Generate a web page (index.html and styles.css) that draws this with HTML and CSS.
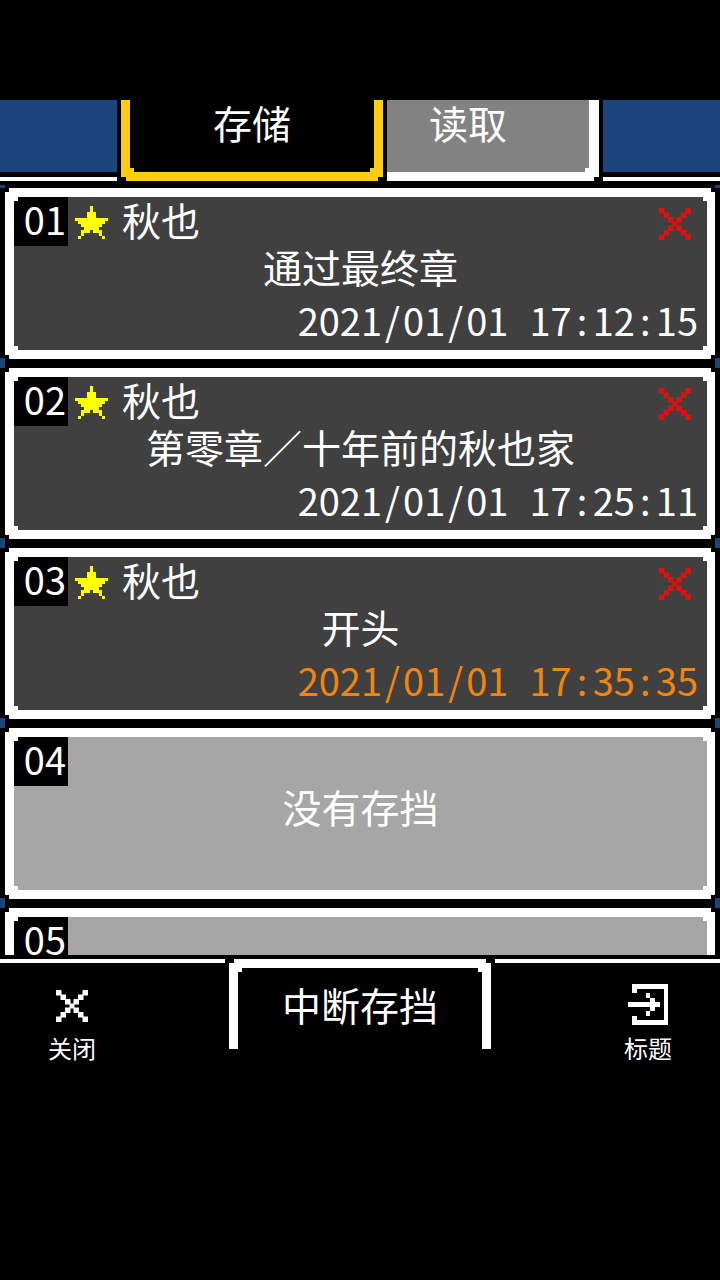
FILE: index.html
```
<!DOCTYPE html>
<html lang="zh-CN">
<head>
<meta charset="UTF-8">
<meta name="viewport" content="width=device-width, initial-scale=1">
<title>存储</title>
<link rel="stylesheet" href="styles.css">
</head>
<body>

<!-- 图标 -->
<svg class="defs" aria-hidden="true">
  <symbol id="star" viewBox="0 0 11 11">
    <path d="M5 0h1v2h-1zM4 2h3v2h-3zM0 4h11v1h-11zM1 5h9v1h-9zM2 6h7v1h-7zM3 7h5v1h-5zM2 8h3v1h-3zM6 8h3v1h-3zM2 9h1v1h-1zM8 9h1v1h-1zM1 10h1v1h-1zM9 10h1v1h-1z"/>
  </symbol>
  <symbol id="cross" viewBox="0 0 64 64">
    <path d="M0 0h11v11h-11zM9 9h11v11h-11zM18 18h11v11h-11zM27 27h10v10h-10zM35 35h11v11h-11zM44 44h11v11h-11zM53 53h11v11h-11zM53 0h11v11h-11zM44 9h11v11h-11zM35 18h11v11h-11zM18 35h11v11h-11zM9 44h11v11h-11zM0 53h11v11h-11z"/>
  </symbol>
  <symbol id="exit" viewBox="0 0 40 41">
    <path d="M4 0h36v41h-36v-9h5v4h27v-31h-27v4h-5zM0 18h22v-4h5v4h5v5h-5v4h-5v-4h-22zM18 9h4v5h-4zM18 27h4v5h-4z"/>
  </symbol>
</svg>

<main class="screen">
  <nav class="tabs">
    <div class="side"></div>
    <button class="tab active">存储</button>
    <button class="tab load">读取</button>
    <div class="side"></div>
  </nav>

  <ul class="list">
    <li class="slot">
      <div class="frame"><div class="card">
        <div class="top">
          <span class="no">01</span>
          <svg class="star"><use href="#star"/></svg>
          <span class="name">秋也</span>
          <button class="del" aria-label="删除 01"><svg><use href="#cross"/></svg></button>
        </div>
        <div class="title">通过最终章</div>
        <time class="time"><span>2021<i>/</i>01<i>/</i>01</span> <span>17<i>:</i>12<i>:</i>15</span></time>
      </div></div>
    </li>
    <li class="slot">
      <div class="frame"><div class="card">
        <div class="top">
          <span class="no">02</span>
          <svg class="star"><use href="#star"/></svg>
          <span class="name">秋也</span>
          <button class="del" aria-label="删除 02"><svg><use href="#cross"/></svg></button>
        </div>
        <div class="title">第零章／十年前的秋也家</div>
        <time class="time"><span>2021<i>/</i>01<i>/</i>01</span> <span>17<i>:</i>25<i>:</i>11</span></time>
      </div></div>
    </li>
    <li class="slot">
      <div class="frame"><div class="card">
        <div class="top">
          <span class="no">03</span>
          <svg class="star"><use href="#star"/></svg>
          <span class="name">秋也</span>
          <button class="del" aria-label="删除 03"><svg><use href="#cross"/></svg></button>
        </div>
        <div class="title">开头</div>
        <time class="time latest"><span>2021<i>/</i>01<i>/</i>01</span> <span>17<i>:</i>35<i>:</i>35</span></time>
      </div></div>
    </li>
    <li class="slot">
      <div class="frame"><div class="card empty">
        <div class="top"><span class="no">04</span></div>
        <div class="title">没有存挡</div>
      </div></div>
    </li>
    <li class="slot">
      <div class="frame"><div class="card empty">
        <div class="top"><span class="no">05</span></div>
      </div></div>
    </li>
  </ul>

  <footer class="bottom">
    <div class="corner">
      <button class="tool"><svg class="close"><use href="#cross"/></svg>关闭</button>
    </div>
    <button class="suspend">中断存挡</button>
    <div class="corner right">
      <button class="tool"><svg class="exit"><use href="#exit"/></svg>标题</button>
    </div>
  </footer>
</main>

</body>
</html>
```
FILE: styles.css
```
* { box-sizing: border-box; }
body { margin: 0; background: #000; color: #fff; font-family: "Noto Sans CJK SC", sans-serif; font-size: 39px; line-height: 44px; }
button { padding: 0; border: none; background: none; color: inherit; font: inherit; cursor: pointer; }
svg { display: block; fill: currentColor; }
.defs { position: absolute; width: 0; height: 0; }

.screen { display: flex; flex-direction: column; height: calc(100vh - 216px); padding-top: 100px; }

/* 上方标签 */
.tabs { display: flex; gap: 4px; flex: none; height: 85px; padding-bottom: 4px; background: #000; position: relative; z-index: 1; }
.side { flex: 1; background: #1a447c; border-bottom: 4px solid #fff; box-shadow: inset 0 -5px #000; }
.tab { height: 81px; padding-bottom: 28px; border-bottom: 9px solid #fff; }
.active { width: 262px; border: 9px solid #ffcc14; border-top: none;
          clip-path: polygon(0 0, 100% 0, 100% calc(100% - 4px), calc(100% - 5px) calc(100% - 4px), calc(100% - 5px) 100%, 5px 100%, 5px calc(100% - 4px), 0 calc(100% - 4px));
          background: linear-gradient(#ffcc14, #ffcc14) left bottom / 4px 4px no-repeat, linear-gradient(#ffcc14, #ffcc14) right bottom / 4px 4px no-repeat; }
.load { width: 212px; padding-right: 40px; border-right: 10px solid #fff;
        clip-path: polygon(0 0, 100% 0, 100% calc(100% - 4px), calc(100% - 5px) calc(100% - 4px), calc(100% - 5px) 100%, 0 100%);
        background: linear-gradient(#fff, #fff) right bottom / 4px 4px no-repeat, #828282; }

/* 存档列表 */
.list { flex: 1; min-height: 0; margin: -2px 0 0; padding: 0; list-style: none; overflow: hidden; background: #1a447c; }
.slot, .frame, .card { clip-path: polygon(var(--n) 0, calc(100% - var(--n)) 0, calc(100% - var(--n)) var(--n), 100% var(--n), 100% calc(100% - var(--n)), calc(100% - var(--n)) calc(100% - var(--n)), calc(100% - var(--n)) 100%, var(--n) 100%, var(--n) calc(100% - var(--n)), 0 calc(100% - var(--n)), 0 var(--n), var(--n) var(--n)); }
.slot { --n: 5px; padding: 5px 5px 4px; background: #000; }
.frame { --n: 4px; padding: 9px 8px 9px 9px; background: #fff; }
.card { --n: 4px; height: 153px; background: #404040; }
.empty { background: #a6a6a6; }
.top { display: flex; height: 49px; }
.no { width: 54px; padding-right: 2px; background: #000; text-align: right; font-size: 38px; }
.star { width: 33px; height: 33px; margin: 9px 14px 0 7px; color: #ff0; }
.del { align-self: flex-start; margin: 11px 16px 0 auto; color: #e01010; }
.del svg, .close { width: 32px; height: 32px; }
.title { height: 48px; text-align: center; line-height: 40px; }
.time { display: flex; justify-content: flex-end; gap: 21px; padding-right: 9px; font-size: 38px; line-height: 52px; }
.time i { display: inline-block; width: 21px; font-style: normal; text-align: center; }
.latest { color: #f5840c; }

/* 下方按钮 */
.bottom { display: flex; gap: 4px; flex: none; height: 109px; padding-top: 4px; background: #000; }
.corner { flex: 1; display: flex; padding: 0 48px; border-top: 4px solid #fff; }
.right { justify-content: flex-end; }
.tool { display: flex; flex-direction: column; align-items: center; justify-content: flex-end; height: 101px; font-size: 24px; line-height: 32px; }
.close { margin-bottom: 10px; }
.exit { width: 40px; height: 41px; margin-bottom: 7px; }
.suspend { width: 262px; height: 90px; padding-bottom: 10px; border: 9px solid #fff; border-bottom: none;
           clip-path: polygon(5px 0, calc(100% - 5px) 0, calc(100% - 5px) 4px, 100% 4px, 100% 100%, 0 100%, 0 4px, 5px 4px);
           background: linear-gradient(#fff, #fff) left top / 4px 4px no-repeat, linear-gradient(#fff, #fff) right top / 4px 4px no-repeat; }
```
